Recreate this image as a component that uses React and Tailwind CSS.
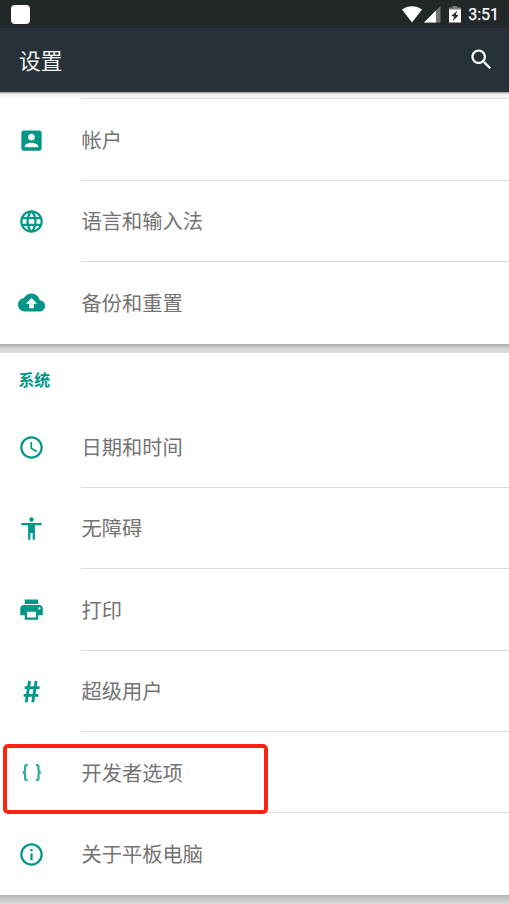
import React from 'react';

const icons = {
  account: 'M3 5v14c0 1.1.89 2 2 2h14c1.1 0 2-.9 2-2V5c0-1.1-.9-2-2-2H5c-1.11 0-2 .9-2 2zm12 4c0 1.66-1.34 3-3 3s-3-1.34-3-3 1.34-3 3-3 3 1.34 3 3zm-9 8c0-2 4-3.1 6-3.1s6 1.1 6 3.1v1H6v-1z',
  language: 'M11.99 2C6.47 2 2 6.48 2 12s4.47 10 9.99 10C17.52 22 22 17.52 22 12S17.52 2 11.99 2zm6.93 6h-2.95c-.32-1.25-.78-2.45-1.38-3.56 1.84.63 3.37 1.91 4.33 3.56zM12 4.04c.83 1.2 1.48 2.53 1.91 3.96h-3.82c.43-1.43 1.08-2.76 1.91-3.96zM4.26 14C4.1 13.36 4 12.69 4 12s.1-1.36.26-2h3.38c-.08.66-.14 1.32-.14 2 0 .68.06 1.34.14 2H4.26zm.82 2h2.95c.32 1.25.78 2.45 1.38 3.56-1.84-.63-3.37-1.9-4.33-3.56zm2.95-8H5.08c.96-1.66 2.49-2.93 4.33-3.56C8.81 5.55 8.35 6.75 8.03 8zM12 19.96c-.83-1.2-1.48-2.53-1.91-3.96h3.82c-.43 1.43-1.08 2.76-1.91 3.96zM14.34 14H9.66c-.09-.66-.16-1.32-.16-2 0-.68.07-1.35.16-2h4.68c.09.65.16 1.32.16 2 0 .68-.07 1.34-.16 2zm.25 5.56c.6-1.11 1.06-2.31 1.38-3.56h2.95c-.96 1.65-2.49 2.93-4.33 3.56zM16.36 14c.08-.66.14-1.32.14-2 0-.68-.06-1.34-.14-2h3.38c.16.64.26 1.31.26 2s-.1 1.36-.26 2h-3.38z',
  backup: 'M19.35 10.04C18.67 6.59 15.64 4 12 4 9.11 4 6.6 5.64 5.35 8.04 2.34 8.36 0 10.91 0 14c0 3.31 2.69 6 6 6h13c2.76 0 5-2.24 5-5 0-2.64-2.05-4.78-4.65-4.96zM14 13v4h-4v-4H7l5-5 5 5h-3z',
  time: 'M11.99 2C6.47 2 2 6.48 2 12s4.47 10 9.99 10C17.52 22 22 17.52 22 12S17.52 2 11.99 2zM12 20c-4.42 0-8-3.58-8-8s3.58-8 8-8 8 3.58 8 8-3.58 8-8 8zm.5-13H11v6l5.25 3.15.75-1.23-4.5-2.67z',
  accessibility: 'M12 2c1.1 0 2 .9 2 2s-.9 2-2 2-2-.9-2-2 .9-2 2-2zm9 7h-6v13h-2v-6h-2v6H9V9H3V7h18v2z',
  print: 'M19 8H5c-1.66 0-3 1.34-3 3v6h4v4h12v-4h4v-6c0-1.66-1.34-3-3-3zm-3 11H8v-5h8v5zm3-7c-.55 0-1-.45-1-1s.45-1 1-1 1 .45 1 1-.45 1-1 1zm-1-9H6v4h12V3z',
  info: 'M11 17h2v-6h-2v6zm1-15C6.48 2 2 6.48 2 12s4.48 10 10 10 10-4.48 10-10S17.52 2 12 2zm0 18c-4.41 0-8-3.59-8-8s3.59-8 8-8 8 3.59 8 8-3.59 8-8 8zM11 9h2V7h-2v2z',
  search: 'M15.5 14h-.79l-.28-.27C15.41 12.59 16 11.11 16 9.5 16 5.91 13.09 3 9.5 3S3 5.91 3 9.5 5.91 16 9.5 16c1.61 0 3.09-.59 4.23-1.57l.27.28v.79l5 4.99L20.49 19l-4.99-5zm-6 0C7.01 14 5 11.99 5 9.5S7.01 5 9.5 5 14 7.01 14 9.5 11.99 14 9.5 14z',
};

// stroked icons
const lineIcons = {
  superuser: 'M10.3 2.6 7.3 21.6M16.1 2.6 13.1 21.6M6 8.6H19.2M5 15.4H18.2',
  developer: 'M8.6 5.3H8.1Q6.3 5.3 6.3 7V9.8Q6.3 12 4.2 12Q6.3 12 6.3 14.2V17Q6.3 18.7 8.1 18.7H8.6M15.9 5.3H16.4Q18.2 5.3 18.2 7V9.8Q18.2 12 20.3 12Q18.2 12 18.2 14.2V17Q18.2 18.7 16.4 18.7H15.9',
};

const accountItems = [
  { icon: 'account', label: '帐户' },
  { icon: 'language', label: '语言和输入法' },
  { icon: 'backup', label: '备份和重置' },
];

const systemItems = [
  { icon: 'time', label: '日期和时间' },
  { icon: 'accessibility', label: '无障碍' },
  { icon: 'print', label: '打印' },
  { icon: 'superuser', label: '超级用户' },
  { icon: 'developer', label: '开发者选项', highlighted: true },
  { icon: 'info', label: '关于平板电脑' },
];

const Icon = ({ name, className }) => (
  <svg viewBox="0 0 24 24" className={className} fill="currentColor">
    {lineIcons[name] ? (
      <path d={lineIcons[name]} fill="none" stroke="currentColor" strokeWidth={name === 'superuser' ? 2.5 : 2} />
    ) : (
      <path d={icons[name]} />
    )}
  </svg>
);

const SettingsRow = ({ item, last }) => (
  <li className="relative flex h-[81.4px]">
    <div className="flex w-[81px] shrink-0 items-center pl-[18px]">
      <Icon name={item.icon} className={`size-[27px] text-[#009688] ${item.icon === 'developer' ? 'opacity-80' : ''}`} />
    </div>
    <div className={`flex flex-1 items-center pl-[0.5px] pt-px ${last ? '' : 'border-b border-[#dcdcdc]'}`}>
      <span className="text-[20.25px] leading-none text-[#737373]">{item.label}</span>
    </div>
    {item.highlighted && (
      <div className="absolute left-[2.5px] top-[12px] h-[70px] w-[265px] rounded-[5px] border-4 border-[#ff2114]" />
    )}
  </li>
);

const StatusBar = () => (
  <div className="flex h-7 shrink-0 items-center justify-between bg-[#22272a] pl-[11px] pr-[10px]">
    <div className="size-[19px] rounded-[4px] bg-white" />
    <div className="flex items-center text-white">
      <svg viewBox="0 0 20 17" className="h-[17px] w-5" fill="currentColor">
        <path d="M0 3.5C6-1 14-1 20 3.5L10 16.5z" />
      </svg>
      <svg viewBox="0 0 17 17" className="ml-[2px] h-[17px] w-[17px]" fill="currentColor">
        <path d="M16.5 0v16.5H0z" opacity=".35" />
        <path d="M12 4.5v12H0z" />
      </svg>
      <svg viewBox="0 0 12 17" className="ml-[8px] h-[17px] w-3">
        <path d="M3.5 0h5v1.5H12V4H0V1.5h3.5z" fill="#7a7d7f" />
        <path d="M0 3.5h12V16.5H0z" fill="#fff" />
        <path d="M8.6 4.5 2.4 9.7l2.9 1.1-1.7 4.2 6-5.4-2.9-1z" fill="#22272a" />
      </svg>
      <span className="ml-[7px] pt-[2px] font-[Roboto] text-[16px] font-normal leading-none [-webkit-text-stroke:0.25px_white]">3:51</span>
    </div>
  </div>
);

const App = () => {
  return (
    <div className="flex h-[904px] w-[509px] flex-col overflow-hidden bg-[#dededc] font-['Noto_Sans_CJK_SC',sans-serif]">
      <StatusBar />
      <header className="flex h-[63.5px] shrink-0 items-center justify-between bg-[#263238] pl-[19px] pr-[14px]">
        <h1 className="text-[21.7px] leading-none text-[#f5f5f5]">设置</h1>
        <Icon name="search" className="size-[27px] text-white" />
      </header>

      <section className="h-[252px] shrink-0 bg-white">
        <div className="h-[7.5px] bg-linear-to-b from-[#9a9d9e] via-[#f0f0f0] via-35% to-white pl-[81px] pt-[6.5px]">
          <div className="h-px bg-[#dcdcdc]" />
        </div>
        <ul className="pt-[0.4px]">
          {accountItems.map((item, i) => (
            <SettingsRow key={item.label} item={item} last={i === accountItems.length - 1} />
          ))}
        </ul>
      </section>

      <div className="h-[9.5px] shrink-0 bg-linear-to-b from-[#a8a8a6] via-[#d4d4d2] via-45% to-[#e0e0de]" />

      <section className="h-[542px] shrink-0 bg-white">
        <h2 className="flex h-[53.4px] items-center pl-[18.5px] text-[15.8px] font-bold leading-none text-[#009688]">系统</h2>
        <ul>
          {systemItems.map((item, i) => (
            <SettingsRow key={item.label} item={item} last={i === systemItems.length - 1} />
          ))}
        </ul>
      </section>

      <div className="flex-1 bg-linear-to-b from-[#b4b4b2] to-[#dcdcda]" />
    </div>
  );
};

export default App;
